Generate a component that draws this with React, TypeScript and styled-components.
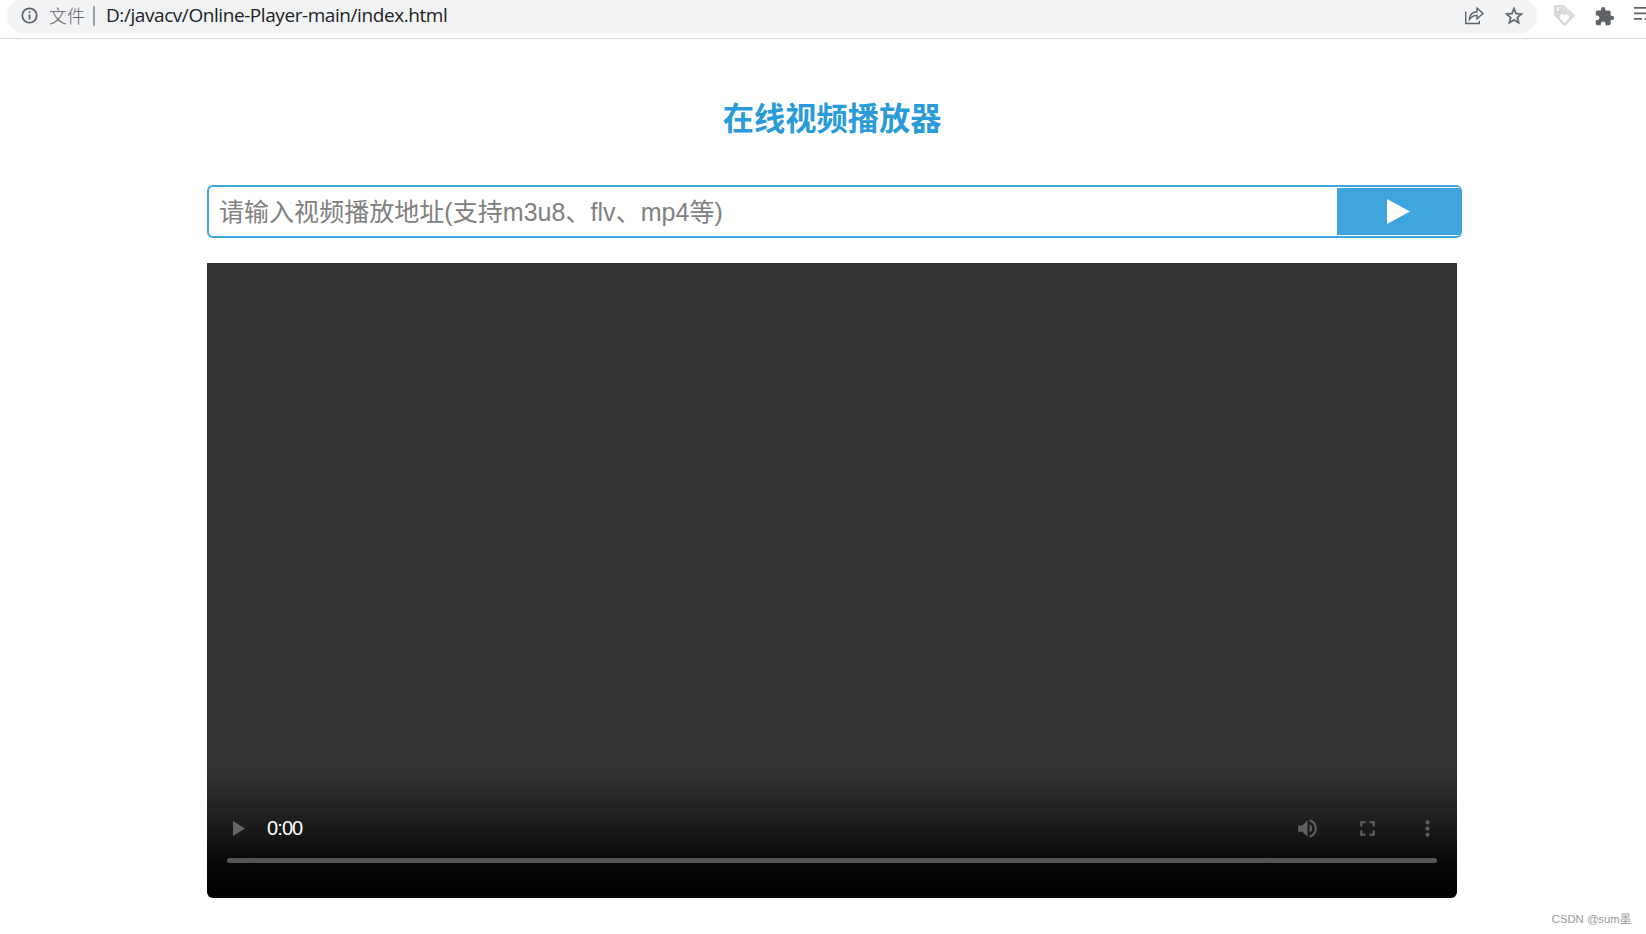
import React from "react";
import styled, { createGlobalStyle } from "styled-components";

const Global = createGlobalStyle`
  * { box-sizing: border-box; }
  body { margin: 0; background: #fff; overflow: hidden; font-family: "Liberation Sans", "Noto Sans CJK SC", sans-serif; }
`;

const Page = styled.div`
  width: 1646px;
  height: 934px;
  display: flex;
  flex-direction: column;
  overflow: hidden;
`;

const Toolbar = styled.header`
  height: 39px;
  flex: none;
  display: flex;
  align-items: flex-start;
  padding-left: 7px;
  border-bottom: 1px solid #dadce0;
  overflow: hidden;
`;

const AddressBar = styled.div`
  width: 1530px;
  height: 35px;
  flex: none;
  margin-top: -2px;
  padding: 0 12px 0 14px;
  border-radius: 18px;
  background: #f1f3f4;
  display: flex;
  align-items: center;
`;

const Scheme = styled.span`
  margin-left: 11px;
  width: 37px;
  padding-bottom: 2px;
  font: 300 18px/28px "Noto Sans CJK SC", sans-serif;
  color: #5f6368;
  white-space: nowrap;
`;

const Separator = styled.i`
  width: 2px;
  height: 20px;
  margin-left: 7px;
  background: #9b9ea2;
`;

const Url = styled.span`
  flex: 1;
  margin-left: 11px;
  padding-bottom: 2px;
  font: 400 19px/28px "Open Sans", sans-serif;
  letter-spacing: -0.43px;
  color: #202124;
  white-space: nowrap;
`;

const BarIcons = styled.div`
  display: flex;
  align-items: center;
  gap: 19px;
`;

const Extensions = styled.div`
  display: flex;
  flex: none;
  height: 32px;
  align-items: center;
  gap: 19px;
  margin-left: 16px;
`;

const Icon = styled.svg`
  display: block;
  flex: none;
  overflow: visible;
`;

const Main = styled.main`
  width: 1250px;
  margin-left: 207px;
  display: flex;
  flex-direction: column;
`;

const Title = styled.h1`
  margin: 55px 0 0;
  height: 46px;
  font: 700 31.25px/46px "Noto Sans CJK SC", sans-serif;
  color: #289bd8;
  text-align: center;
`;

const SearchRow = styled.div`
  width: 1255px;
  height: 53px;
  margin-top: 45px;
  border: 2px solid #3fa5dc;
  border-right-width: 0;
  border-radius: 6px;
  padding: 1px 0;
  display: flex;
  overflow: hidden;
`;

const Placeholder = styled.div`
  flex: 1;
  padding-left: 10px;
  font-size: 25px;
  line-height: 49px;
  letter-spacing: 0.04px;
  color: #808080;
  white-space: nowrap;
`;

const PlayButton = styled.button`
  width: 125px;
  height: 47px;
  border: 0;
  padding: 0 2px 0 0;
  background: #3fa5dc;
  display: flex;
  align-items: center;
  justify-content: center;
`;

const Video = styled.section`
  height: 635px;
  margin-top: 25px;
  border-radius: 0 0 6px 6px;
  background: linear-gradient(to bottom, #333 0, #333 508px, #202020 552px, #141414 577px, #080808 597px, #000 625px);
  display: flex;
  flex-direction: column;
  justify-content: flex-end;
  padding: 0 20px 35px;
`;

const Controls = styled.div`
  height: 20px;
  margin-bottom: 20px;
  padding-left: 6px;
  display: flex;
  align-items: center;
`;

const Time = styled.span`
  flex: 1;
  margin-left: 22px;
  font: 400 20px/20px "Liberation Sans", sans-serif;
  letter-spacing: -0.9px;
  color: #fff;
`;

const Timeline = styled.div`
  height: 5px;
  border-radius: 3px;
  background: #555;
`;

const VideoIcons = styled.div`
  display: flex;
  align-items: center;
  gap: 35px;
  margin-right: -3px;
`;

const Credit = styled.footer`
  margin: 12px 15px 0 auto;
  font-size: 11.3px;
  line-height: 18px;
  color: #999;
  white-space: nowrap;
`;

export default function App() {
  return (
    <Page>
      <Global />
      <Toolbar>
        <AddressBar>
          <Icon width="17" height="17" viewBox="0 0 17 17">
            <circle cx="8.5" cy="8.5" r="7.2" fill="none" stroke="#5f6368" strokeWidth="1.8" />
            <path d="M7.6 4.2h1.9v1.9H7.6zM7.6 7.6h1.9v5H7.6z" fill="#5f6368" />
          </Icon>
          <Scheme>文件</Scheme>
          <Separator />
          <Url>D:/javacv/Online-Player-main/index.html</Url>
          <BarIcons>
            <Icon width="20" height="19" viewBox="0 0 20 19" fill="none" stroke="#5f6368" strokeWidth="1.4">
              <path d="M1.7 5.5v12h13.6v-2.6M5.4 13.5C5.6 8.6 8.3 6 13 5.7V2l6 5.5-6 5.2V9.4c-3.6 0-5.6 1.3-7.6 4.1z" />
            </Icon>
            <Icon width="22" height="22" viewBox="0 0 24 24" fill="#5f6368" stroke="#5f6368" strokeWidth="0.3">
              <path d="M22 9.24l-7.19-.62L12 2 9.19 8.63 2 9.24l5.46 4.73L5.82 21 12 17.27 18.18 21l-1.63-7.03L22 9.24zM12 15.4l-3.76 2.27 1-4.28-3.32-2.88 4.38-.38L12 6.1l1.71 4.04 4.38.38-3.32 2.88 1 4.28L12 15.4z" />
            </Icon>
          </BarIcons>
        </AddressBar>
        <Extensions>
          <Icon width="22" height="22" viewBox="0 0 22 22">
            <path d="M1 2Q1 0 3 0h7.5L21 9.500q1 1 0 2.200l-8.200 8.600q-1.300 1-2.600 0L1 10z" fill="#d8d8d8" />
            <path d="M2.600 2.500h7L19.500 11" fill="none" stroke="#ececec" strokeWidth="1" />
            <path d="M11.500 18.200L7.300 13.700c-2.200-3 1.800-5.700 4.200-3.200 2.400-2.500 6.400.2 4.200 3.200z" fill="#fff" />
            <circle cx="4.800" cy="4.500" r="1.300" fill="#fff" />
          </Icon>
          <Icon width="21" height="21" viewBox="0 0 24 24" fill="#5f6368">
            <path d="M20.5 11H19V7c0-1.1-.9-2-2-2h-4V3.5a2.5 2.5 0 0 0-5 0V5H4c-1.1 0-1.99.9-1.99 2v3.8H3.5c1.49 0 2.7 1.21 2.7 2.7s-1.21 2.7-2.7 2.7H2V20c0 1.1.9 2 2 2h3.8v-1.5c0-1.49 1.21-2.7 2.7-2.7 1.49 0 2.7 1.21 2.7 2.7V22H17c1.1 0 2-.9 2-2v-4h1.5a2.5 2.5 0 0 0 0-5z" />
          </Icon>
          <Icon width="22" height="22" viewBox="0 0 22 22" fill="#5f6368">
            <path d="M0 2h14v1.800H0zM0 7.500h14v1.800H0zM0 13h8v1.800H0zM10.500 13h4v1.800h-4z" />
          </Icon>
        </Extensions>
      </Toolbar>
      <Main>
        <Title>在线视频播放器</Title>
        <SearchRow>
          <Placeholder>请输入视频播放地址(支持m3u8、flv、mp4等)</Placeholder>
          <PlayButton aria-label="play">
            <Icon width="23" height="25" viewBox="0 0 23 25">
              <path d="M0 0L23 12.5 0 25z" fill="#fff" />
            </Icon>
          </PlayButton>
        </SearchRow>
        <Video>
          <Controls>
            <Icon width="12" height="15" viewBox="0 0 12 15">
              <path d="M0 0L12 7.5 0 15z" fill="#666" />
            </Icon>
            <Time>0:00</Time>
            <VideoIcons>
              <Icon width="25" height="25" viewBox="0 0 24 24" fill="#606060">
                <path d="M3 9v6h4l5 5V4L7 9H3zm13.5 3c0-1.77-1.02-3.29-2.5-4.03v8.05c1.48-.73 2.5-2.25 2.5-4.02zM14 3.23v2.06c2.89.86 5 3.54 5 6.71s-2.11 5.85-5 6.71v2.06c4.01-.91 7-4.49 7-8.77s-2.99-7.86-7-8.77z" />
              </Icon>
              <Icon width="25" height="25" viewBox="0 0 24 24" fill="#606060">
                <path d="M7 14H5v5h5v-2H7v-3zm-2-4h2V7h3V5H5v5zm12 7h-3v2h5v-5h-2v3zM14 5v2h3v3h2V5h-5z" />
              </Icon>
              <Icon width="25" height="25" viewBox="0 0 24 24" fill="#606060">
                <path d="M12 8c1.1 0 2-.9 2-2s-.9-2-2-2-2 .9-2 2 .9 2 2 2zm0 2c-1.1 0-2 .9-2 2s.9 2 2 2 2-.9 2-2-.9-2-2-2zm0 6c-1.1 0-2 .9-2 2s.9 2 2 2 2-.9 2-2-.9-2-2-2z" />
              </Icon>
            </VideoIcons>
          </Controls>
          <Timeline />
        </Video>
      </Main>
      <Credit>CSDN @sum墨</Credit>
    </Page>
  );
}
